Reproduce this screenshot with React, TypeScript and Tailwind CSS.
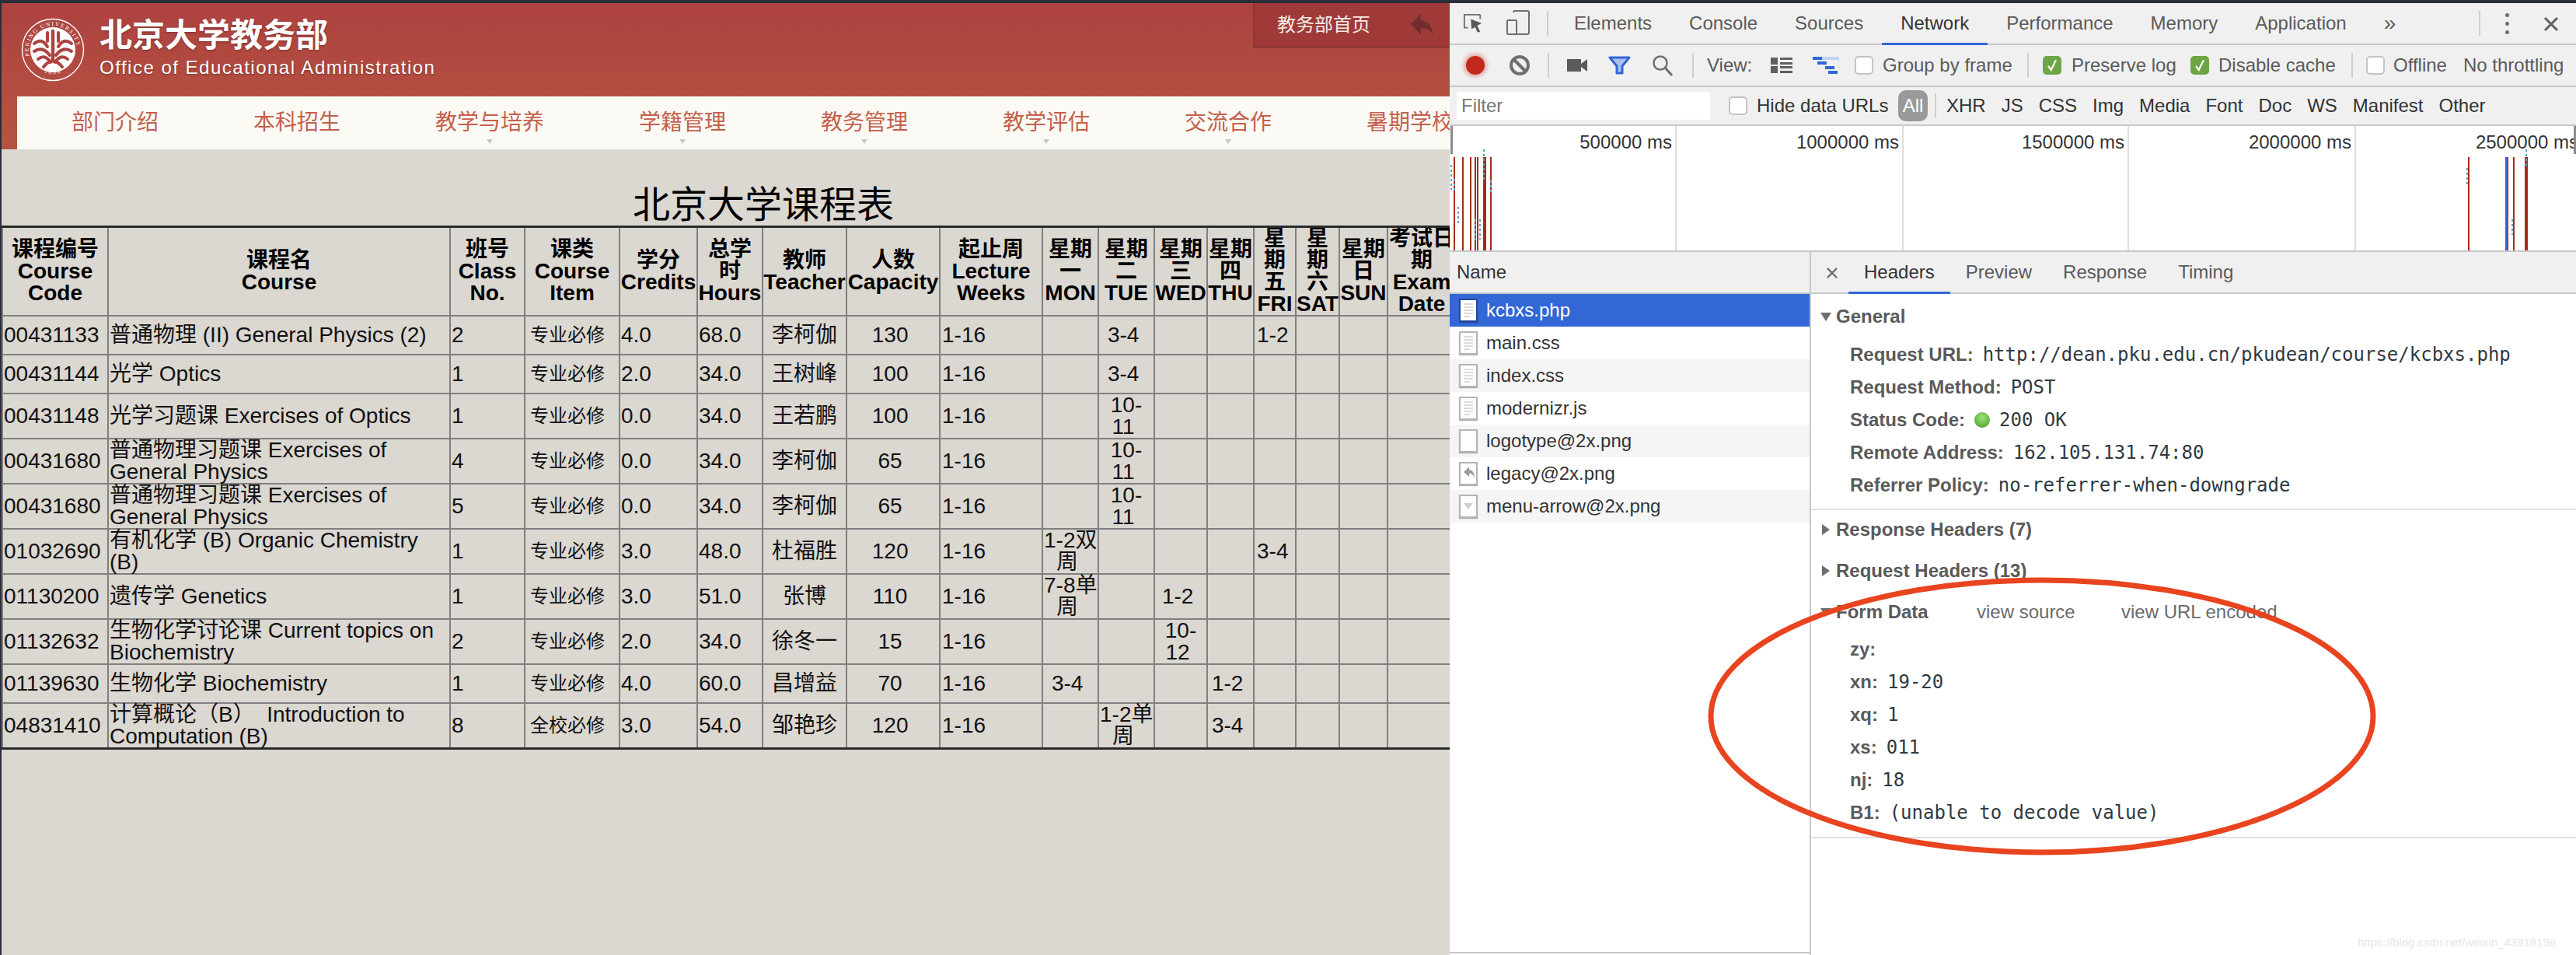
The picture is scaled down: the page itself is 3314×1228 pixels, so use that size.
import type { ReactNode } from "react";

const navItems = [
  { label: "部门介绍", arrow: false },
  { label: "本科招生", arrow: false },
  { label: "教学与培养", arrow: true },
  { label: "学籍管理", arrow: true },
  { label: "教务管理", arrow: true },
  { label: "教学评估", arrow: true },
  { label: "交流合作", arrow: true },
  { label: "暑期学校", arrow: false },
];

const columns = [
  "w-[136px]", "w-[440px]", "w-[96px]", "w-[122px]", "w-[100px]", "w-[84px]", "w-[108px]", "w-[120px]", "w-[132px]",
  "w-[72px]", "w-[72px]", "w-[68px]", "w-[60px]", "w-[54px]", "w-[56px]", "w-[62px]", "w-[88px]", "w-[90px]",
];

const headers = [
  ["课程编号", "Course", "Code"],
  ["课程名", "Course"],
  ["班号", "Class", "No."],
  ["课类", "Course", "Item"],
  ["学分", "Credits"],
  ["总学", "时", "Hours"],
  ["教师", "Teacher"],
  ["人数", "Capacity"],
  ["起止周", "Lecture", "Weeks"],
  ["星期", "一", "MON"],
  ["星期", "二", "TUE"],
  ["星期", "三", "WED"],
  ["星期", "四", "THU"],
  ["星", "期", "五", "FRI"],
  ["星", "期", "六", "SAT"],
  ["星期", "日", "SUN"],
  ["考试日", "期", "Exam", "Date"],
  [""],
];

// the source page leaves a trailing space in the centred cells, so they sit a little left of centre
const s = "\u00a0";
const rows = [
  { h: "h-[50px]", code: "00431133", name: "普通物理 (II) General Physics (2)", no: "2", item: "专业必修", cr: "4.0", hrs: "68.0", t: "李柯伽", cap: "130", days: ["", `3-4${s}`, "", "", "1-2"] },
  { h: "h-[50px]", code: "00431144", name: "光学 Optics", no: "1", item: "专业必修", cr: "2.0", hrs: "34.0", t: "王树峰", cap: "100", days: ["", `3-4${s}`, "", "", ""] },
  { h: "h-[58px]", code: "00431148", name: "光学习题课 Exercises of Optics", no: "1", item: "专业必修", cr: "0.0", hrs: "34.0", t: "王若鹏", cap: "100", days: ["", `10-\n11${s}`, "", "", ""] },
  { h: "h-[58px]", code: "00431680", name: "普通物理习题课 Exercises of General Physics", no: "4", item: "专业必修", cr: "0.0", hrs: "34.0", t: "李柯伽", cap: "65", days: ["", `10-\n11${s}`, "", "", ""] },
  { h: "h-[58px]", code: "00431680", name: "普通物理习题课 Exercises of General Physics", no: "5", item: "专业必修", cr: "0.0", hrs: "34.0", t: "李柯伽", cap: "65", days: ["", `10-\n11${s}`, "", "", ""] },
  { h: "h-[58px]", code: "01032690", name: "有机化学 (B) Organic Chemistry (B)", no: "1", item: "专业必修", cr: "3.0", hrs: "48.0", t: "杜福胜", cap: "120", days: [`1-2双\n周${s}`, "", "", "", "3-4"] },
  { h: "h-[58px]", code: "01130200", name: "遗传学 Genetics", no: "1", item: "专业必修", cr: "3.0", hrs: "51.0", t: "张博", cap: "110", days: [`7-8单\n周${s}`, "", `1-2${s}`, "", ""] },
  { h: "h-[58px]", code: "01132632", name: "生物化学讨论课 Current topics on Biochemistry", no: "2", item: "专业必修", cr: "2.0", hrs: "34.0", t: "徐冬一", cap: "15", days: ["", "", `10-\n12${s}`, "", ""] },
  { h: "h-[50px]", code: "01139630", name: "生物化学 Biochemistry", no: "1", item: "专业必修", cr: "4.0", hrs: "60.0", t: "昌增益", cap: "70", days: [`3-4${s}`, "", "", `1-2${s}`, ""] },
  { h: "h-[58px]", code: "04831410", name: "计算概论（B）\u00a0 Introduction to Computation (B)", no: "8", item: "全校必修", cr: "3.0", hrs: "54.0", t: "邹艳珍", cap: "120", days: ["", `1-2单\n周${s}`, "", `3-4${s}`, ""] },
];

const cell = "border-2 border-[#808080] px-[1px] align-middle";

function PkuLogo() {
  return (
    <svg viewBox="0 0 82 82" className="h-[82px] w-[82px] shrink-0">
      <defs>
        <path id="ring-top" d="M41 41 m-30 8 a31 31 0 1 1 60 0" />
        <path id="ring-bottom" d="M27 69 a32 32 0 0 0 28 0" />
      </defs>
      <circle cx="41" cy="41" r="39.5" fill="none" stroke="#fff" strokeWidth="1.4" />
      <circle cx="41" cy="41" r="29" fill="#fff" />
      <text fontSize="7.5" fill="#fff" fontFamily="Liberation Serif, serif" letterSpacing="1.6">
        <textPath href="#ring-top">PEKING UNIVERSITY</textPath>
      </text>
      <text fontSize="7" fill="#fff" fontFamily="Liberation Serif, serif" letterSpacing="2.5">
        <textPath href="#ring-bottom" startOffset="3">1898</textPath>
      </text>
      <g fill="none" stroke="#ad4340" strokeWidth="4" strokeLinecap="round">
        <path d="M41 17 V55" strokeWidth="4.5" />
        <path d="M34 19 V30 M48 19 V30" />
        <path d="M17 33 Q27 25 34 37 M65 33 Q55 25 48 37" />
        <path d="M17 43 Q28 36 37 48 M65 43 Q54 36 45 48" />
        <path d="M22 53 Q31 46 38 57 M60 53 Q51 46 44 57" />
        <path d="M29 63 Q41 48 53 63" />
      </g>
    </svg>
  );
}

function WebPage() {
  return (
    <div className="h-full w-[1863px] shrink-0 overflow-hidden bg-[#dbd7d1]">
      <div className="flex h-[188px] flex-col bg-gradient-to-b from-[#ad4240] to-[#b75440]">
        <div className="flex h-[120px] justify-between">
          <div className="flex items-start pl-[25px] pt-[19px]">
            <PkuLogo />
            <div className="ml-[19px] text-white [text-shadow:0_1px_3px_rgba(0,0,0,0.3)]">
              <div className="-mt-[1px] text-[42px] font-bold leading-[48px]">北京大学教务部</div>
              <div className="mt-[2px] whitespace-nowrap text-[24px] leading-[30px] tracking-[1.5px]">Office of Educational Administration</div>
            </div>
          </div>
          <div className="flex h-[58px] w-[253px] items-center border-b-[3px] border-l-2 border-[#8f3535] bg-[#9f3a39] pl-[29px]">
            <span className="w-[172px] text-[24px] text-[#f7ebe6]">教务部首页</span>
            <svg viewBox="0 0 28 28" className="h-[28px] w-[28px]">
              <path d="M0 13 L13 0 V8 C23 9 28 16 28 27 C25 20 20 18 13 18 V27 Z" fill="#6f2d2e" />
            </svg>
          </div>
        </div>
        <div className="ml-[20px] flex h-[68px] gap-[122px] overflow-hidden bg-[#fbfaf5] pl-[70px]">
          {navItems.map((n) => (
            <div key={n.label} className="relative flex shrink-0 items-center whitespace-nowrap text-[28px] text-[#c4604c]">
              {n.label}
              {n.arrow && (
                <span className="absolute bottom-[7px] left-1/2 h-0 w-0 -translate-x-1/2 border-x-[4px] border-t-[6px] border-x-transparent border-t-[#c9c9bc]" />
              )}
            </div>
          ))}
        </div>
      </div>

      <div className="mt-[46px] w-[1960px] text-center text-[48px] leading-[52px] text-black">北京大学课程表</div>

      <table className="w-[1960px] table-fixed border-collapse border-y-[3px] border-[#2a2a2a] text-[28px] leading-[28px] text-[#111]">
        <colgroup>
          {columns.map((c, i) => (
            <col key={i} className={c} />
          ))}
        </colgroup>
        <thead>
          <tr className="h-[113px]">
            {headers.map((lines, i) => (
              <th key={i} className="overflow-hidden border-x-2 border-b-2 border-[#808080] align-middle font-bold text-black">
                {lines.map((l, j) => (
                  <div key={j} className="whitespace-nowrap">{l}</div>
                ))}
              </th>
            ))}
          </tr>
        </thead>
        <tbody>
          {rows.map((r, i) => (
            <tr key={i} className={r.h}>
              <td className={`${cell} whitespace-nowrap`}>{r.code}</td>
              <td className={cell}>{r.name}</td>
              <td className={cell}>{r.no}</td>
              <td className={`${cell} pl-[6px] text-[24px]`}>{r.item}</td>
              <td className={cell}>{r.cr}</td>
              <td className={cell}>{r.hrs}</td>
              <td className={`${cell} text-center`}>{r.t}</td>
              <td className={`${cell} text-center`}>{r.cap}{s}</td>
              <td className={`${cell} pl-[2px]`}>1-16</td>
              {r.days.map((d, j) => (
                <td key={j} className={`${cell} whitespace-pre ${j === 4 ? "pl-[3px] text-left" : "text-center"}`}>{d}</td>
              ))}
              <td className={cell} />
              <td className={cell} />
              <td className={cell} />
              <td className={cell} />
            </tr>
          ))}
        </tbody>
      </table>
    </div>
  );
}

function Sep({ className }: { className: string }) {
  return <span className={`h-[32px] w-[2px] shrink-0 bg-[#cfcfcf] ${className}`} />;
}

function Check({ checked, className = "" }: { checked?: boolean; className?: string }) {
  return checked ? (
    <span className={`flex h-[24px] w-[24px] shrink-0 items-center justify-center rounded-[5px] bg-[#6ea544] ${className}`}>
      <svg viewBox="0 0 24 24" className="h-[20px] w-[20px]">
        <path d="M6 13 L10.5 19 L18 4" fill="none" stroke="#fff" strokeWidth="2.6" />
      </svg>
    </span>
  ) : (
    <span className={`h-[24px] w-[24px] shrink-0 rounded-[5px] border-2 border-[#c4c4c4] bg-white ${className}`} />
  );
}

function Timeline() {
  const red = [[5, 2], [16, 2], [26, 2], [32, 2], [35, 2], [43, 4], [52, 2], [1310, 2], [1360, 2], [1368, 2], [1383, 4]];
  const teal = [[2, 50, 32], [6, 68, 16], [11, 104, 24], [39, 120, 26], [44, 30, 40], [53, 70, 18], [33, 120, 30], [1309, 54, 24], [1385, 30, 24], [1367, 120, 20]];
  return (
    <div className="relative h-[162px] shrink-0 border-b-2 border-[#c8c8c8] bg-white">
      <div className="flex h-[160px] overflow-hidden text-[24px] leading-[42px] text-[#333]">
        {["w-[292px]", "w-[292px]", "w-[290px]", "w-[292px]", "w-[292px]"].map((w, i) => (
          <div key={i} className={`${w} shrink-0 whitespace-nowrap border-r-2 border-[#dedede] pr-[4px] text-right ${i === 4 ? "border-r-0" : ""}`}>
            {`${(i + 1) * 500000} ms`}
          </div>
        ))}
      </div>
      <svg className="absolute left-0 top-0 h-[160px] w-[1449px]" viewBox="0 0 1449 160">
        <rect x="1" y="0" width="3" height="36" fill="#8a8a8a" />
        <rect x="1446" y="0" width="3" height="36" fill="#8a8a8a" />
        {red.map(([x, w]) => (
          <rect key={x} x={x} y="40" width={w} height="120" fill="#a52c1a" />
        ))}
        <rect x="1358" y="40" width="3" height="120" fill="#3367d6" />
        {teal.map(([x, y, h]) => (
          <line key={`${x}-${y}`} x1={x} x2={x} y1={y} y2={y + h} stroke="#5ba3b8" strokeWidth="2" strokeDasharray="3 3" />
        ))}
      </svg>
    </div>
  );
}

function DocIcon({ lines = true, active, children }: { lines?: boolean; active?: boolean; children?: ReactNode }) {
  return (
    <span className={`relative flex h-[30px] w-[24px] shrink-0 flex-col gap-[2px] border-2 bg-white px-[4px] py-[4px] shadow-[0_1px_1px_rgba(0,0,0,0.3)] ${active ? "border-[#27479a]" : "border-[#b5b5b5]"}`}>
      {lines && (
        <>
          <span className="h-[2px] bg-[#dcdcdc]" />
          <span className="h-[2px] bg-[#dcdcdc]" />
          <span className="h-[2px] bg-[#dcdcdc]" />
          <span className="h-[2px] bg-[#dcdcdc]" />
          <span className="h-[2px] w-[8px] bg-[#dcdcdc]" />
        </>
      )}
      {children}
    </span>
  );
}

function NameRow({ name, bg, icon }: { name: string; bg: string; icon: ReactNode }) {
  return (
    <div className={`flex h-[42px] items-center gap-[11px] pl-[12px] text-[24px] ${bg}`}>
      {icon}
      <span>{name}</span>
    </div>
  );
}

function HeaderLine({ label, children }: { label: string; children?: ReactNode }) {
  return (
    <div className="flex h-[42px] items-center whitespace-nowrap pl-[50px]">
      <span className="font-bold text-[#5a5a5a]">{label}</span>
      {children}
    </div>
  );
}

function Mono({ children }: { children: ReactNode }) {
  return <span className="ml-[12px] [font-family:'DejaVu_Sans_Mono',monospace] text-[#303942]">{children}</span>;
}

function SectionHead({ open, label, className = "" }: { open?: boolean; label: string; className?: string }) {
  return (
    <div className={`flex h-[42px] items-center pl-[12px] font-bold text-[#5a5a5a] ${className}`}>
      <span className="flex w-[20px] shrink-0">
        {open ? (
          <span className="h-0 w-0 border-x-[7px] border-t-[11px] border-x-transparent border-t-[#6e6e6e]" />
        ) : (
          <span className="ml-[2px] h-0 w-0 border-y-[7px] border-l-[10px] border-y-transparent border-l-[#6e6e6e]" />
        )}
      </span>
      <span className="whitespace-nowrap">{label}</span>
    </div>
  );
}

function DevTools() {
  return (
    <div className="flex h-full min-w-0 flex-1 flex-col overflow-hidden bg-[#f0f0f0] text-[24px] text-[#5a5a5a]">
      {/* main tabs */}
      <div className="flex h-[54px] shrink-0 items-stretch border-b-2 border-[#c8c8c8]">
        <svg viewBox="0 0 28 28" className="ml-[17px] mt-[13px] h-[26px] w-[26px] shrink-0">
          <path d="M9 2 H2 V20 H7 M24 2 H9 M24 2 V8" fill="none" stroke="#6e6e6e" strokeWidth="2" />
          <path d="M11 8 L26 14 L20 17 L24 26 L20 26 L17 19 L12 22 Z" fill="#5a5a5a" />
        </svg>
        <svg viewBox="0 0 30 32" className="ml-[30px] mt-[9px] h-[32px] w-[30px] shrink-0">
          <path d="M9 3 a2 2 0 0 1 2-2 H27 a2 2 0 0 1 2 2 V29 a2 2 0 0 1-2 2 H11" fill="none" stroke="#6e6e6e" strokeWidth="2" />
          <rect x="1" y="13" width="12" height="18" rx="1.5" fill="#f0f0f0" stroke="#6e6e6e" strokeWidth="2" />
        </svg>
        <Sep className="ml-[22px] mt-[10px]" />
        <div className="ml-[9px] flex shrink-0">
          {["Elements", "Console", "Sources", "Network", "Performance", "Memory", "Application"].map((t) => (
            <div key={t} className={`-mb-[2px] flex items-center border-b-[3px] px-[24px] ${t === "Network" ? "border-[#3367d6] text-[#333]" : "border-transparent"}`}>
              {t}
            </div>
          ))}
        </div>
        <span className="ml-[24px] flex shrink-0 items-center text-[28px] leading-none">»</span>
        <Sep className="ml-[107px] mt-[10px]" />
        <span className="ml-[32px] flex shrink-0 flex-col justify-center gap-[6px]">
          <span className="h-[5px] w-[5px] rounded-full bg-[#6e6e6e]" />
          <span className="h-[5px] w-[5px] rounded-full bg-[#6e6e6e]" />
          <span className="h-[5px] w-[5px] rounded-full bg-[#6e6e6e]" />
        </span>
        <svg viewBox="0 0 20 20" className="ml-[44px] mt-[17px] h-[20px] w-[20px] shrink-0">
          <path d="M2 2 L18 18 M18 2 L2 18" stroke="#5f5f5f" strokeWidth="3" />
        </svg>
      </div>

      {/* network toolbar */}
      <div className="flex h-[54px] shrink-0 items-center border-b-2 border-[#c8c8c8] whitespace-nowrap">
        <span className="ml-[21px] h-[24px] w-[24px] shrink-0 rounded-full bg-[#c1291a] shadow-[0_0_5px_3px_rgba(193,41,26,0.35)]" />
        <svg viewBox="0 0 28 28" className="ml-[31px] h-[28px] w-[28px] shrink-0">
          <circle cx="14" cy="14" r="11" fill="none" stroke="#6e6e6e" strokeWidth="4" />
          <path d="M6 6 L22 22" stroke="#6e6e6e" strokeWidth="4" />
        </svg>
        <Sep className="ml-[22px]" />
        <svg viewBox="0 0 26 16" className="ml-[23px] h-[16px] w-[26px] shrink-0">
          <rect x="0" y="0" width="18" height="16" fill="#5a5a5a" />
          <path d="M18 6 L26 0 V16 L18 10 Z" fill="#5a5a5a" />
        </svg>
        <svg viewBox="0 0 29 24" className="ml-[27px] h-[24px] w-[29px] shrink-0">
          <path d="M2 2 H27 L18 13 V22 H11 V13 Z" fill="#a8c1f0" stroke="#3367d6" strokeWidth="3" strokeLinejoin="round" />
        </svg>
        <svg viewBox="0 0 28 28" className="ml-[27px] h-[28px] w-[28px] shrink-0">
          <circle cx="11" cy="11" r="8.5" fill="none" stroke="#6e6e6e" strokeWidth="2.5" />
          <path d="M17 17 L26 27" stroke="#6e6e6e" strokeWidth="3" />
        </svg>
        <Sep className="ml-[24px]" />
        <span className="ml-[17px] w-[59px]">View:</span>
        <svg viewBox="0 0 28 20" className="ml-[23px] h-[20px] w-[28px] shrink-0">
          <path d="M0 0 H9 V9 H0 Z M0 11 H9 V20 H0 Z M12 0 H28 V3 H12 Z M12 6 H28 V9 H12 Z M12 11 H28 V14 H12 Z M12 17 H28 V20 H12 Z" fill="#5f5f5f" />
        </svg>
        <svg viewBox="0 0 34 22" className="ml-[26px] h-[22px] w-[34px] shrink-0">
          <rect x="12" y="0" width="22" height="4" fill="#c0d3f3" />
          <rect x="0" y="0" width="12" height="4" fill="#3367d6" />
          <rect x="6" y="6" width="12" height="4" fill="#3367d6" />
          <rect x="16" y="12" width="12" height="4" fill="#3367d6" />
          <rect x="20" y="18" width="12" height="4" fill="#3367d6" />
        </svg>
        <Check className="ml-[20px]" />
        <span className="ml-[12px] w-[167px]">Group by frame</span>
        <Sep className="ml-[19px]" />
        <Check checked className="ml-[18px]" />
        <span className="ml-[13px] w-[131px]">Preserve log</span>
        <Check checked className="ml-[22px]" />
        <span className="ml-[12px] w-[151px]">Disable cache</span>
        <Sep className="ml-[20px]" />
        <Check className="ml-[17px]" />
        <span className="ml-[11px] w-[69px]">Offline</span>
        <span className="ml-[21px]">No throttling</span>
      </div>

      {/* filter bar */}
      <div className="flex h-[50px] shrink-0 items-center border-b-2 border-[#c8c8c8] whitespace-nowrap text-[#333]">
        <div className="ml-[9px] flex h-[36px] w-[326px] items-center bg-white pl-[6px] text-[#777]">Filter</div>
        <Check className="ml-[24px]" />
        <span className="ml-[12px] w-[170px]">Hide data URLs</span>
        <span className="ml-[12px] flex h-[40px] w-[38px] items-center justify-center rounded-[10px] bg-[#999] text-white">All</span>
        <Sep className="ml-[9px]" />
        <div className="ml-[13px] flex gap-[20px]">
          <span>XHR</span>
          <span>JS</span>
          <span>CSS</span>
          <span>Img</span>
          <span>Media</span>
          <span>Font</span>
          <span>Doc</span>
          <span>WS</span>
          <span>Manifest</span>
          <span>Other</span>
        </div>
      </div>

      <Timeline />

      <div className="flex min-h-0 flex-1">
        {/* request list */}
        <div className="flex w-[465px] shrink-0 flex-col border-r-2 border-[#c8c8c8]">
          <div className="flex h-[54px] shrink-0 items-center border-b-2 border-[#c8c8c8] pl-[9px] text-[#333]">Name</div>
          <div className="flex-1 border-b-2 border-[#c8c8c8] bg-white text-[#333]">
            <NameRow name="kcbxs.php" bg="bg-[#3367d6] text-white" icon={<DocIcon active />} />
            <NameRow name="main.css" bg="bg-white" icon={<DocIcon />} />
            <NameRow name="index.css" bg="bg-[#f5f5f5]" icon={<DocIcon />} />
            <NameRow name="modernizr.js" bg="bg-white" icon={<DocIcon />} />
            <NameRow name="logotype@2x.png" bg="bg-[#f5f5f5]" icon={<DocIcon lines={false} />} />
            <NameRow
              name="legacy@2x.png"
              bg="bg-white"
              icon={
                <DocIcon lines={false}>
                  <svg viewBox="0 0 14 14" className="h-[14px] w-[14px]">
                    <path d="M0 7 L7 0 V4 C11 4 14 8 14 14 C12 10 10 9 7 9 V13 Z" fill="#9c9c9c" />
                  </svg>
                </DocIcon>
              }
            />
            <NameRow
              name="menu-arrow@2x.png"
              bg="bg-[#f5f5f5]"
              icon={
                <DocIcon lines={false}>
                  <span className="mt-[5px] h-0 w-0 border-x-[6px] border-t-[8px] border-x-transparent border-t-[#d0d0c4]" />
                </DocIcon>
              }
            />
          </div>
          <div className="h-[2px] shrink-0 bg-white" />
        </div>

        {/* request detail */}
        <div className="flex min-w-0 flex-1 flex-col bg-white">
          <div className="flex h-[54px] shrink-0 items-stretch border-b-2 border-[#c8c8c8] bg-[#f0f0f0]">
            <svg viewBox="0 0 16 16" className="ml-[20px] mt-[20px] h-[14px] w-[14px]">
              <path d="M1 1 L15 15 M15 1 L1 15" stroke="#6e6e6e" strokeWidth="2.5" />
            </svg>
            <div className="ml-[14px] flex">
              {["Headers", "Preview", "Response", "Timing"].map((t) => (
                <div key={t} className={`-mb-[2px] flex items-center border-b-[3px] px-[20px] ${t === "Headers" ? "border-[#3367d6] text-[#333]" : "border-transparent"}`}>
                  {t}
                </div>
              ))}
            </div>
          </div>

          <div className="border-b-2 border-[#e0e0e0] pb-[9px] pt-[8px]">
            <SectionHead open label="General" />
            <div className="mt-[7px]">
              <HeaderLine label="Request URL:"><Mono>http://dean.pku.edu.cn/pkudean/course/kcbxs.php</Mono></HeaderLine>
              <HeaderLine label="Request Method:"><Mono>POST</Mono></HeaderLine>
              <HeaderLine label="Status Code:">
                <span className="ml-[12px] h-[20px] w-[20px] rounded-full bg-[radial-gradient(circle_at_50%_35%,#9fe07a,#3f9e1e)]" />
                <Mono>200 OK</Mono>
              </HeaderLine>
              <HeaderLine label="Remote Address:"><Mono>162.105.131.74:80</Mono></HeaderLine>
              <HeaderLine label="Referrer Policy:"><Mono>no-referrer-when-downgrade</Mono></HeaderLine>
            </div>
          </div>

          <SectionHead label="Response Headers (7)" className="mt-[4px]" />
          <SectionHead label="Request Headers (13)" className="mt-[11px]" />

          <div className="mt-[11px] border-b-2 border-[#e0e0e0] pb-[10px]">
            <div className="flex items-center">
              <SectionHead open label="Form Data" className="w-[213px] shrink-0" />
              <span className="w-[186px] shrink-0 text-[#6a6a6a]">view source</span>
              <span className="whitespace-nowrap text-[#6a6a6a]">view URL encoded</span>
            </div>
            <div className="mt-[6px]">
              <HeaderLine label="zy:" />
              <HeaderLine label="xn:"><Mono>19-20</Mono></HeaderLine>
              <HeaderLine label="xq:"><Mono>1</Mono></HeaderLine>
              <HeaderLine label="xs:"><Mono>011</Mono></HeaderLine>
              <HeaderLine label="nj:"><Mono>18</Mono></HeaderLine>
              <HeaderLine label="B1:"><Mono>(unable to decode value)</Mono></HeaderLine>
            </div>
          </div>
        </div>
      </div>
    </div>
  );
}

export default function App() {
  return (
    <div className="relative h-[1228px] w-[3314px] overflow-hidden bg-[#2a2d3a] pl-[2px] pt-[4px] [font-family:'Liberation_Sans','Noto_Sans_CJK_SC',sans-serif]">
      <div className="flex h-full">
        <WebPage />
        <DevTools />
      </div>

      {/* hand drawn annotation */}
      <svg className="pointer-events-none absolute left-[2190px] top-[735px] h-[375px] w-[880px]" viewBox="0 0 880 375">
        <ellipse cx="437" cy="186" rx="426" ry="175" fill="none" stroke="#e8441f" strokeWidth="7" />
      </svg>

      <div className="absolute left-[3033px] top-[1201px] whitespace-nowrap text-[15px] text-[#e6e6e6]">
        https://blog.csdn.net/weixin_43918196
      </div>
    </div>
  );
}
